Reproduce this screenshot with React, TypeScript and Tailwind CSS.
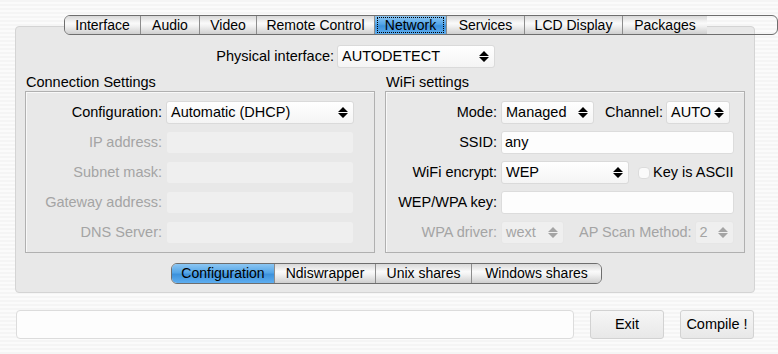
import React from "react";

const topTabs = [
  { label: "Interface", w: "w-[75px]" },
  { label: "Audio", w: "w-[59px]" },
  { label: "Video", w: "w-[57px]" },
  { label: "Remote Control", w: "w-[118px]" },
  { label: "Network", w: "w-[72px]", active: true, focus: true },
  { label: "Services", w: "w-[78px]" },
  { label: "LCD Display", w: "w-[98px]" },
  { label: "Packages", w: "w-[85px]" },
];

const bottomTabs = [
  { label: "Configuration", w: "w-[102px]", active: true },
  { label: "Ndiswrapper", w: "w-[101px]" },
  { label: "Unix shares", w: "w-[96px]" },
  { label: "Windows shares", w: "w-[130px]" },
];

type Tab = { label: string; w: string; active?: boolean; focus?: boolean };

const TabBar = ({ tabs, h }: { tabs: Tab[]; h: string }) => (
  <div className={`relative z-10 flex ${h} text-[14px] rounded-[6px] border border-[#6e6e6e] overflow-hidden`}>
    {tabs.map((t, i) => (
      <div
        key={t.label}
        className={`${t.w} flex items-stretch ${
          i > 0 ? "border-l border-[#8c8c8c]" : ""
        } ${
          t.active
            ? "bg-[linear-gradient(to_bottom,#8cc6f2,#55a6e8_45%,#3d92dc_55%,#5eaef0)]"
            : "bg-[linear-gradient(to_bottom,#d8d8d8,#fafafa_40%,#f2f2f2_55%,#cfcfcf)]"
        }`}
      >
        <span
          className={`flex-1 flex items-center justify-center ${
            t.focus ? "mx-[2px] my-[1px] border border-dotted border-black" : ""
          }`}
        >
          {t.label}
        </span>
      </div>
    ))}
  </div>
);

const Arrows = ({ className }: { className?: string }) => (
  <svg width="10" height="11" viewBox="0 0 10 11" className={`shrink-0 ${className ?? ""}`}>
    <path d="M5 0L10 5H0Z M0 6H10L5 11Z" fill="currentColor" />
  </svg>
);

const Select = ({
  value,
  w,
  disabled,
}: {
  value: string;
  w: string;
  disabled?: boolean;
}) => (
  <div
    className={`${w} h-[23px] shrink-0 flex items-center justify-between gap-[2px] pl-[4px] pr-[5px] rounded-[3px] border ${
      disabled
        ? "bg-[#efefef] border-[#e6e6e6] text-[#a4a4a4]"
        : "bg-[linear-gradient(to_bottom,#ffffff,#f4f4f4)] border-[#dadada] text-black"
    }`}
  >
    <span className="whitespace-nowrap">{value}</span>
    <Arrows className={disabled ? "text-[#a4a4a4]" : "text-black"} />
  </div>
);

const Input = ({ value, disabled }: { value?: string; disabled?: boolean }) => (
  <div
    className={`h-[23px] w-full flex items-center pl-[3px] rounded-[3px] border ${
      disabled ? "bg-[#efefef] border-[#e8e8e8]" : "bg-[#fdfdfd] border-[#dcdcdc]"
    }`}
  >
    {value}
  </div>
);

const Label = ({ text, disabled }: { text: string; disabled?: boolean }) => (
  <div
    className={`h-[23px] flex items-center justify-end whitespace-nowrap ${
      disabled ? "text-[#a4a4a4]" : "text-black"
    }`}
  >
    {text}
  </div>
);

export default function App() {
  return (
    <div className="w-[778px] h-[354px] overflow-hidden font-['Liberation_Sans',Arial,sans-serif] text-[14.5px] text-black bg-[repeating-linear-gradient(to_bottom,#f5f5f5_0px,#f5f5f5_2px,#fbfbfb_2px,#fbfbfb_4px)]">
      <div className="flex flex-col pt-[15px] pl-[15px]">
        <div className="pl-[49px]">
          <TabBar tabs={topTabs} h="h-[20px]" />
        </div>

        {/* Main panel */}
        <div className="-mt-[9px] w-[740px] h-[267px] flex flex-col rounded-[4px] border border-[#d4d4d4] bg-[#e8e8e8] pt-[18px]">
          <div className="flex items-center h-[23px] pl-[178px]">
            <div className="w-[140px] text-right whitespace-nowrap">Physical interface:</div>
            <div className="ml-[3px]">
              <Select value="AUTODETECT" w="w-[158px]" />
            </div>
          </div>

          <div className="flex gap-[10px] pl-[9px] mt-[6px]">
            {/* Connection settings */}
            <div className="flex flex-col">
              <div className="leading-[17px] h-[17px] pl-[1px]">Connection Settings</div>
              <div className="w-[350px] h-[162px] border border-[#b0b0b0] shadow-[inset_1px_1px_0_#f8f8f8] pt-[9px]">
                <div className="grid grid-cols-[136px_188px] gap-x-[4px] gap-y-[7px]">
                  <Label text="Configuration:" />
                  <Select value="Automatic (DHCP)" w="w-[188px]" />
                  <Label text="IP address:" disabled />
                  <Input disabled />
                  <Label text="Subnet mask:" disabled />
                  <Input disabled />
                  <Label text="Gateway address:" disabled />
                  <Input disabled />
                  <Label text="DNS Server:" disabled />
                  <Input disabled />
                </div>
              </div>
            </div>

            {/* WiFi settings */}
            <div className="flex flex-col">
              <div className="leading-[17px] h-[17px] pl-[1px]">WiFi settings</div>
              <div className="w-[360px] h-[162px] border border-[#b0b0b0] shadow-[inset_1px_1px_0_#f8f8f8] pt-[9px]">
                <div className="grid grid-cols-[111px_233px] gap-x-[4px] gap-y-[7px]">
                  <Label text="Mode:" />
                  <div className="flex items-center">
                    <Select value="Managed" w="w-[93px]" />
                    <span className="ml-[11px] mr-[3px]">Channel:</span>
                    <Select value="AUTO" w="w-[64px]" />
                  </div>
                  <Label text="SSID:" />
                  <Input value="any" />
                  <Label text="WiFi encrypt:" />
                  <div className="flex items-center">
                    <Select value="WEP" w="w-[128px]" />
                    <span className="ml-[9px] w-[12px] h-[12px] shrink-0 rounded-[4px] border border-[#dcdcdc] bg-[#fafafa]" />
                    <span className="ml-[3px] whitespace-nowrap">Key is ASCII</span>
                  </div>
                  <Label text="WEP/WPA key:" />
                  <Input />
                  <Label text="WPA driver:" disabled />
                  <div className="flex items-center">
                    <Select value="wext" w="w-[63px]" disabled />
                    <span className="ml-[15px] mr-[3px] text-[#a4a4a4] whitespace-nowrap">AP Scan Method:</span>
                    <Select value="2" w="w-[39px]" disabled />
                  </div>
                </div>
              </div>
            </div>
          </div>

          <div className="flex mt-[10px] pl-[155px]">
            <TabBar tabs={bottomTabs} h="h-[21px]" />
          </div>
        </div>

        {/* Bottom bar */}
        <div className="flex items-center mt-[17px] pl-[1px]">
          <div className="w-[558px] h-[29px] rounded-[4px] border border-[#dcdcdc] bg-[#fdfdfd]" />
          <button className="ml-[16px] w-[74px] h-[29px] rounded-[3px] border border-[#d2d2d2] bg-[linear-gradient(to_bottom,#f6f6f6,#e8e8e8)]">
            Exit
          </button>
          <button className="ml-[16px] w-[74px] h-[29px] rounded-[3px] border border-[#d2d2d2] bg-[linear-gradient(to_bottom,#f6f6f6,#e8e8e8)] whitespace-nowrap">
            Compile !
          </button>
        </div>
      </div>
    </div>
  );
}
